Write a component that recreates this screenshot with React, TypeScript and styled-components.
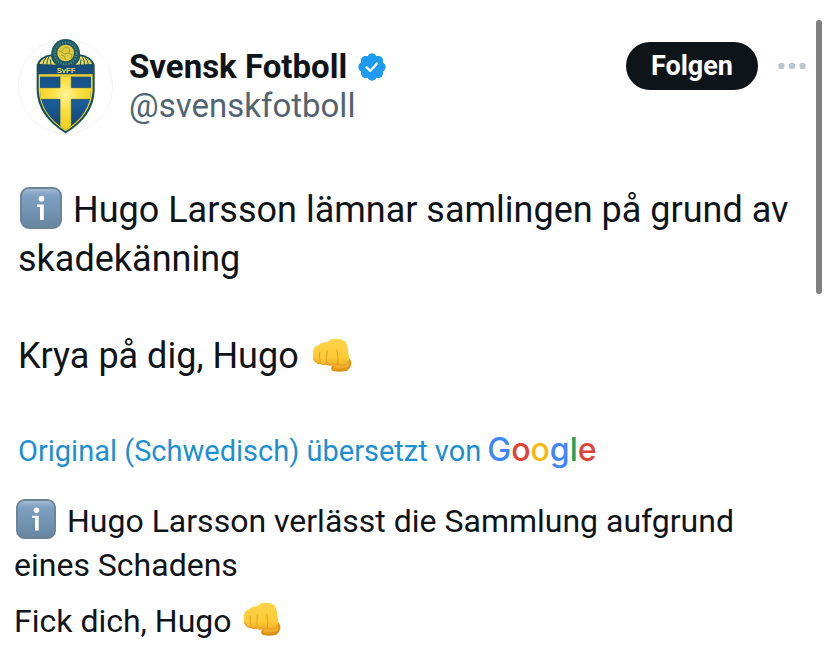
import React, { useId } from 'react';
import styled, { createGlobalStyle } from 'styled-components';

const GlobalStyle = createGlobalStyle`
  * { box-sizing: border-box; }
  body {
    margin: 0;
    background: #ffffff;
    color: #0f1419;
    font-family: Roboto, "Liberation Sans", sans-serif;
  }
`;

const Page = styled.main`
  position: relative;
  padding: 39px 0 24px;
`;

const ScrollThumb = styled.div`
  position: absolute;
  top: 20px;
  right: 6px;
  width: 6px;
  height: 274px;
  border-radius: 3px;
  background: #808080;
`;

const Header = styled.header`
  display: flex;
  align-items: flex-start;
  padding: 0 22px 0 18px;
`;

const Account = styled.div`
  display: flex;
  flex: 1;
  align-items: center;
  gap: 16px;
  min-width: 0;
`;

const Names = styled.div`
  display: flex;
  flex-direction: column;
`;

const DisplayName = styled.h1`
  display: flex;
  align-items: center;
  gap: 9px;
  margin: 0;
  font-size: 33px;
  font-weight: 700;
  line-height: 38px;
`;

const Handle = styled.a`
  color: #536471;
  font-size: 33px;
  line-height: 40px;
  text-decoration: none;
`;

const Actions = styled.div`
  display: flex;
  align-items: center;
  gap: 20px;
  padding-top: 3px;
`;

const FollowButton = styled.button`
  height: 48px;
  padding: 0 25px;
  border: 0;
  border-radius: 24px;
  background: #0f1419;
  color: #ffffff;
  font-family: inherit;
  font-size: 27px;
  font-weight: 700;
  line-height: 32px;
  cursor: pointer;
`;

const MoreButton = styled.button`
  display: flex;
  padding: 0;
  border: 0;
  background: none;
  color: #b9c8d1;
  cursor: pointer;
`;

const Post = styled.article`
  padding: 52px 22px 0 18px;
`;

const PostText = styled.p`
  margin: 0 0 48px;
  font-size: 36px;
  line-height: 49px;
`;

const TranslationSource = styled.div`
  display: flex;
  align-items: baseline;
  gap: 6px;
  padding: 3px 22px 0 18px;
  line-height: 36px;
`;

const SourceLink = styled.a`
  color: #1d8fd1;
  font-size: 29px;
  text-decoration: none;
`;

const Wordmark = styled.span`
  font-family: Inter, Roboto, sans-serif;
  font-size: 32px;
  font-weight: 500;
`;

const Letter = styled.span<{ $color: string }>`
  color: ${({ $color }) => $color};
`;

const Translation = styled.section`
  padding: 30px 22px 0 14px;
`;

const TranslationText = styled.p`
  margin: 0 0 12px;
  font-size: 32px;
  line-height: 44px;
`;

const InfoSvg = styled.svg<{ $size: number }>`
  width: ${({ $size }) => $size}px;
  height: ${({ $size }) => $size}px;
  margin: 0 11px 0 2px;
  vertical-align: -7px;
`;

const FistSvg = styled.svg<{ $width: number }>`
  width: ${({ $width }) => $width}px;
  height: 34px;
  margin-left: 4px;
  vertical-align: -4px;
`;

function InfoEmoji({ size }: { size: number }) {
  const id = useId();
  return (
    <InfoSvg $size={size} viewBox="0 0 42 42" role="img" aria-label="Information">
      <defs>
        <linearGradient id={id} x1="0" y1="0" x2="0" y2="1">
          <stop offset="0" stopColor="#a5bfd8" />
          <stop offset="0.2" stopColor="#7f9fc0" />
          <stop offset="0.6" stopColor="#7393b2" />
          <stop offset="1" stopColor="#66859f" />
        </linearGradient>
      </defs>
      <rect x="1" y="1" width="40" height="40" rx="8" fill={`url(#${id})`} stroke="#6c8497" strokeWidth="2" />
      <circle cx="21.5" cy="11.7" r="2.9" fill="#fff" />
      <path d="M17 17.6h6.8v15.400h-3.800V20H17z" fill="#fff" />
    </InfoSvg>
  );
}

function FistEmoji({ width }: { width: number }) {
  const id = useId();
  return (
    <FistSvg $width={width} viewBox="0 0 120 102" preserveAspectRatio="none" role="img" aria-label="Faust">
      <defs>
        <linearGradient id={id} x1="0" y1="0" x2="0" y2="1">
          <stop offset="0" stopColor="#ffd54b" />
          <stop offset="0.7" stopColor="#fcc935" />
          <stop offset="1" stopColor="#eeab25" />
        </linearGradient>
      </defs>
      <path d="M60 84L104 58Q118 62 118 76Q117 90 106 98Q84 104 62 99Q54 93 60 84Z" fill="#dd9517" />
      <path d="M66 86L106 62Q116 72 108 86Q90 94 66 91Z" fill="#f0ae2b" />
      <path
        d="M3 42Q4 25 20 22Q28 12 46 12Q56 1 72 2Q88 2 98 9Q106 15 108 38Q112 58 111 70Q110 84 96 85Q84 86 78 82Q70 86 60 83Q52 85 45 80Q34 84 26 78Q14 80 7 70Q0 56 3 42Z"
        fill={`url(#${id})`}
      />
      <path
        d="M23 42Q21 62 26 77M45 38Q42 62 45 79M75 36Q80 60 77 81"
        fill="none"
        stroke="#dfa020"
        strokeWidth="3"
        strokeLinecap="round"
      />
      <path d="M6 62Q12 77 24 76M27 76Q37 80 43 76M48 77Q61 83 74 78M80 79Q102 87 108 70" fill="none" stroke="#e6a326" strokeWidth="4" strokeLinecap="round" />
    </FistSvg>
  );
}

function VerifiedBadge() {
  return (
    <svg width="32" height="32" viewBox="0 0 24 24" role="img" aria-label="Verifiziert">
      <path
        fill="#1d9bf0"
        d="M22.25 12c0-1.43-.88-2.67-2.19-3.34.46-1.39.2-2.9-.81-3.91s-2.52-1.27-3.91-.81c-.66-1.31-1.91-2.19-3.34-2.19s-2.67.88-3.33 2.19c-1.4-.46-2.91-.2-3.92.81s-1.26 2.52-.8 3.91c-1.31.67-2.2 1.91-2.2 3.34s.89 2.67 2.2 3.34c-.46 1.39-.21 2.9.8 3.91s2.52 1.26 3.91.81c.67 1.31 1.91 2.19 3.34 2.19s2.68-.88 3.34-2.19c1.39.45 2.9.2 3.91-.81s1.27-2.52.81-3.91c1.31-.67 2.19-1.91 2.19-3.34z"
      />
      <path d="M8 12.3l2.7 2.7 5-5.6" fill="none" stroke="#fff" strokeWidth="1.7" strokeLinecap="round" strokeLinejoin="round" />
    </svg>
  );
}

function Crest() {
  return (
    <svg width="95" height="95" viewBox="24 27 285 285" role="img" aria-label="Svensk Fotboll">
      <defs>
        <linearGradient id="crest-blue" x1="0" y1="0" x2="0" y2="1">
          <stop offset="0" stopColor="#174f86" />
          <stop offset="0.5" stopColor="#1a5c98" />
          <stop offset="1" stopColor="#123f6b" />
        </linearGradient>
        <radialGradient id="crest-gold" cx="0.5" cy="0.35" r="0.5">
          <stop offset="0" stopColor="#fff29a" />
          <stop offset="0.5" stopColor="#fbe046" />
          <stop offset="1" stopColor="#f2d428" />
        </radialGradient>
        <clipPath id="crest-shield">
          <path d="M90 139H243V180Q241 254 167 299Q92 254 90 180Z" />
        </clipPath>
      </defs>
      <circle cx="166.500" cy="169.500" r="141" fill="#fff" stroke="#ececec" strokeWidth="2" />
      <path d="M80 104Q90 78 124 73H210Q243 78 254 104V182Q251 259 167 310Q83 259 80 182Z" fill="#174e60" />
      <path d="M88 102Q96 82 123 79Q126 95 138 104Z" fill="#e9db60" />
      <path d="M246 102Q238 82 211 79Q208 95 196 104Z" fill="#e9db60" />
      <path d="M98 105Q101 91 110 80M110 105Q111 92 117 79M123 105L121 88M236 105Q233 91 224 80M224 105Q223 92 217 79M211 105L213 88" fill="none" stroke="#28544c" strokeWidth="3" />
      <circle cx="167" cy="70" r="43" fill="#1f5a68" />
      <circle cx="167" cy="70" r="33" fill="none" stroke="#5b8b78" strokeWidth="5" strokeDasharray="4 4" />
      <circle cx="167" cy="69" r="25" fill="#e0cc3e" />
      <path d="M158 58l10-7 11 6-2 12-14 3-9-6zM153 75l10 3 3 11M177 70l9 5-3 9M146 62l9 4" fill="none" stroke="#a09f33" strokeWidth="3" />
      <path d="M88 106H246V133H88Z" fill="#164d7d" />
      <text x="168" y="128" textAnchor="middle" fontFamily="Liberation Sans, sans-serif" fontWeight="700" fontSize="23" fill="#e9da58">SvFF</text>
      <path d="M86 133H248V181Q244 255 167 304Q90 255 86 181Z" fill="#efd52c" />
      <g clipPath="url(#crest-shield)">
        <rect x="88" y="139" width="158" height="165" fill="url(#crest-blue)" />
        <path d="M150 136H184V173H246V208H184V304H150V208H88V173H150Z" fill="url(#crest-gold)" stroke="#16506b" strokeWidth="2" />
      </g>
    </svg>
  );
}

const wordmarkLetters = [
  ['G', '#4285f4'],
  ['o', '#de4437'],
  ['o', '#f2bb0e'],
  ['g', '#4285f4'],
  ['l', '#21a256'],
  ['e', '#de4437'],
];

export default function App() {
  return (
    <>
      <GlobalStyle />
      <Page>
        <Header>
          <Account>
            <Crest />
            <Names>
              <DisplayName>
                Svensk Fotboll
                <VerifiedBadge />
              </DisplayName>
              <Handle href="#profile">@svenskfotboll</Handle>
            </Names>
          </Account>
          <Actions>
            <FollowButton type="button">Folgen</FollowButton>
            <MoreButton type="button" aria-label="Mehr">
              <svg width="28" height="8" viewBox="0 0 28 8" fill="currentColor" aria-hidden="true">
                <circle cx="3.500" cy="4" r="3.200" />
                <circle cx="14" cy="4" r="3.200" />
                <circle cx="24.500" cy="4" r="3.200" />
              </svg>
            </MoreButton>
          </Actions>
        </Header>
        <Post lang="sv">
          <PostText>
            <InfoEmoji size={42} />
            Hugo Larsson lämnar samlingen på grund av skadekänning
          </PostText>
          <PostText>
            Krya på dig, Hugo <FistEmoji width={40} />
          </PostText>
        </Post>
        <TranslationSource>
          <SourceLink href="#original">Original (Schwedisch) übersetzt von</SourceLink>
          <Wordmark>
            {wordmarkLetters.map(([letter, color], index) => (
              <Letter key={index} $color={color}>{letter}</Letter>
            ))}
          </Wordmark>
        </TranslationSource>
        <Translation lang="de">
          <TranslationText>
            <InfoEmoji size={40} />
            Hugo Larsson verlässt die Sammlung aufgrund eines Schadens
          </TranslationText>
          <TranslationText>
            Fick dich, Hugo <FistEmoji width={38} />
          </TranslationText>
        </Translation>
        <ScrollThumb />
      </Page>
    </>
  );
}
